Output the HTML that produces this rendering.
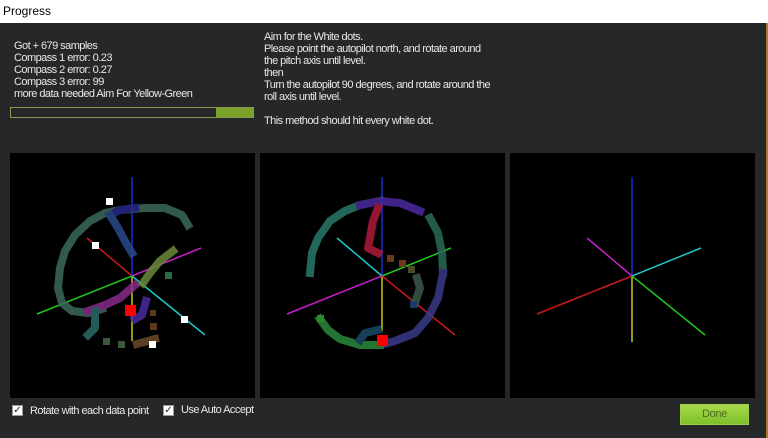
<!DOCTYPE html>
<html><head><meta charset="utf-8"><style>
body{margin:0;width:768px;height:438px;overflow:hidden;background:#262729;font-family:"Liberation Sans",sans-serif;position:relative}
.title{position:absolute;left:0;top:0;width:768px;height:23px;background:#fff;font-size:12px;color:#000;line-height:23px;padding-left:3px;box-sizing:border-box}
.edge{position:absolute;left:766px;top:23px;width:2px;height:415px;background:#b07a2a}
.t{position:absolute;color:#e8e8e8;font-size:11px;line-height:12px;white-space:pre;letter-spacing:-0.55px}
.bar{position:absolute;left:10px;top:107px;width:244px;height:11px;border:1px solid #8a9a50;box-sizing:border-box;background:#262729}
.fill{position:absolute;left:205px;top:0;width:37px;height:9px;background:#7aa12a}
svg.p{position:absolute;top:153px;width:245px;height:245px;background:#000}
.cb{position:absolute;top:405px;width:11px;height:11px;background:#fff;border:1px solid #999;box-sizing:border-box;font-size:10px;line-height:9px;color:#222;text-align:center}
.done{position:absolute;left:680px;top:404px;width:69px;height:21px;background:linear-gradient(#a6d94a,#7fbf2a);border:1px solid #9fcf50;box-sizing:border-box;color:#4c6a20;font-size:11px;text-align:center;line-height:19px;letter-spacing:-0.4px}
</style></head><body>
<div class="title">Progress</div>
<div class="edge"></div>
<div class="t" style="left:14px;top:40px">Got + 679 samples
Compass 1 error: 0.23
Compass 2 error: 0.27
Compass 3 error: 99
more data needed Aim For Yellow-Green</div>
<div class="t" style="left:264px;top:31px">Aim for the White dots.
Please point the autopilot north, and rotate around
the pitch axis until level.
then
Turn the autopilot 90 degrees, and rotate around the
roll axis until level.

This method should hit every white dot.</div>
<div class="bar"><div class="fill"></div></div>

<svg class="p" style="left:10px" viewBox="0 0 245 245">
<g stroke-width="1.5">
<line x1="122" y1="123" x2="122" y2="24" stroke="#1a2ad0"/>
<line x1="122" y1="123" x2="122" y2="188" stroke="#c8c81a"/>
<line x1="122" y1="123" x2="27" y2="161" stroke="#1ec81e"/>
<line x1="122" y1="123" x2="191" y2="95" stroke="#c81ec8"/>
<line x1="122" y1="123" x2="77" y2="85" stroke="#c81a1a"/>
<line x1="122" y1="123" x2="195" y2="182" stroke="#1ec8c8"/>
</g>
<g fill="none" stroke-width="8" stroke-linejoin="round" stroke-linecap="square" opacity="0.85">
<polyline points="178,72 172,62 155,55 135,55 110,57 95,60 80,68 65,82 55,98 50,115 48,135 52,150 62,158 78,160 92,156" stroke="#3a6a5a"/>
<polyline points="125,55 110,57 100,62" stroke="#2a2a8a"/>
<polyline points="100,62 108,75 116,90 122,100" stroke="#2a4a8a"/>
<polyline points="78,158 95,152 110,145 125,132" stroke="#8a2a8a"/>
<polyline points="163,98 150,108 140,120 133,130" stroke="#6a8a3a"/>
<polyline points="136,148 132,162 125,166" stroke="#4a2aa0"/>
<polyline points="85,158 85,175 78,182" stroke="#2a6a6a"/>
<polyline points="127,191 145,186" stroke="#6a4a2a"/>
</g>
<g fill="#5a3a1a"><rect x="140" y="170" width="7" height="7"/><rect x="140" y="157" width="6" height="6"/><rect x="155" y="119" width="7" height="7" fill="#2a6a4a"/><rect x="108" y="188" width="7" height="7" fill="#3a5a3a"/><rect x="93" y="185" width="7" height="7" fill="#3a5a3a"/></g>
<g fill="#fff"><rect x="96" y="45" width="7" height="7"/><rect x="82" y="89" width="7" height="7"/><rect x="171" y="163" width="7" height="7"/><rect x="139" y="188" width="7" height="7"/></g>
<rect x="115" y="152" width="11" height="11" fill="#f00"/>
</svg>

<svg class="p" style="left:260px" viewBox="0 0 245 245">
<g stroke-width="1.5">
<line x1="122" y1="123" x2="122" y2="24" stroke="#1a2ad0"/>
<line x1="122" y1="123" x2="122" y2="178" stroke="#c8c81a"/>
<line x1="122" y1="123" x2="27" y2="161" stroke="#c81ec8"/>
<line x1="122" y1="123" x2="191" y2="95" stroke="#1ec81e"/>
<line x1="122" y1="123" x2="77" y2="85" stroke="#1ec8c8"/>
<line x1="122" y1="123" x2="195" y2="182" stroke="#c81a1a"/>
</g>
<g fill="none" stroke-width="8" stroke-linejoin="round" stroke-linecap="square" opacity="0.85">
<polyline points="50,120 52,100 58,85 70,68 85,58 100,52 120,48" stroke="#2a7a6a"/>
<polyline points="100,52 120,48 140,50 160,58" stroke="#4a2aa0"/>
<polyline points="170,65 178,80 182,100 183,120" stroke="#2a6a5a"/>
<polyline points="183,120 178,145 168,165 155,180 135,188 120,192" stroke="#3a3a8a"/>
<polyline points="120,192 100,192 80,186 68,177 60,166" stroke="#2a8a3a"/>
<polyline points="100,187 105,180 118,177" stroke="#1a4a6a"/>
<polyline points="118,55 113,68 110,85 108,95 118,100" stroke="#b01a3a"/>
<polyline points="157,125 160,135 155,150" stroke="#3a5a4a"/>
</g>
<g fill="#6a3a1a"><rect x="127" y="102" width="7" height="7"/><rect x="139" y="107" width="7" height="7"/><rect x="148" y="113" width="7" height="7" fill="#4a4a2a"/><rect x="150" y="148" width="7" height="7" fill="#1a3a6a"/><rect x="57" y="162" width="7" height="7" fill="#2a8a2a"/></g>
<rect x="117" y="182" width="11" height="11" fill="#f00"/>
</svg>

<svg class="p" style="left:510px" viewBox="0 0 245 245">
<g stroke-width="1.5">
<line x1="122" y1="123" x2="122" y2="24" stroke="#1a2ad0"/>
<line x1="122" y1="123" x2="122" y2="189" stroke="#c8c81a"/>
<line x1="122" y1="123" x2="27" y2="161" stroke="#c81a1a"/>
<line x1="122" y1="123" x2="191" y2="95" stroke="#1ec8c8"/>
<line x1="122" y1="123" x2="77" y2="85" stroke="#c81ec8"/>
<line x1="122" y1="123" x2="195" y2="182" stroke="#1ec81e"/>
</g>
</svg>

<div class="cb" style="left:12px">✓</div>
<div class="t" style="left:30px;top:405px">Rotate with each data point</div>
<div class="cb" style="left:163px">✓</div>
<div class="t" style="left:181px;top:404px">Use Auto Accept</div>
<div class="done">Done</div>
</body></html>
